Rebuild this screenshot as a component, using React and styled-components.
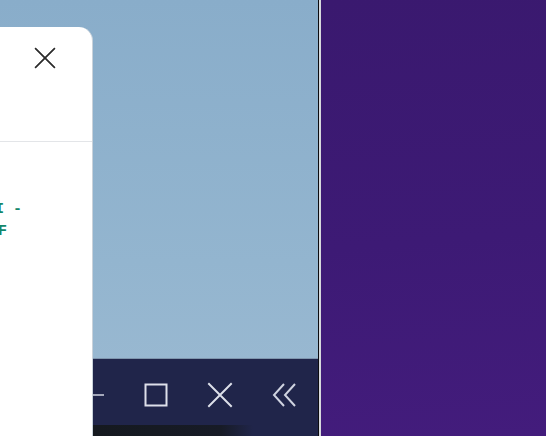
import styled, { createGlobalStyle } from "styled-components";

const GlobalStyle = createGlobalStyle`
    html, body {
        margin: 0;
        padding: 0;
        overflow: hidden;
        background: #3b1a72;
    }
`;

const Screen = styled.div`
    display: flex;
    width: 546px;
    height: 436px;
    overflow: hidden;
`;

const Desktop = styled.section`
    display: flex;
    flex-shrink: 0;
    width: 319px;
    height: 100%;
    box-sizing: border-box;
    background: linear-gradient(180deg, #89adca 0%, #93b5cf 60%, #9cbad2 100%);
    border-right: 1px solid #0c0c10;
`;

const Splitter = styled.div`
    flex-shrink: 0;
    width: 2px;
    background: #d6d8dc;
`;

const Wallpaper = styled.section`
    flex: 1;
    background: linear-gradient(175deg, #3a196f 0%, #3d1a75 55%, #431c7c 100%);
`;

const Dialog = styled.div`
    display: flex;
    flex-direction: column;
    flex-shrink: 0;
    width: 93px;
    margin-top: 27px;
    background: #ffffff;
    border-right: 1px solid #c9d2da;
    border-top-right-radius: 14px;
    box-sizing: border-box;
    overflow: hidden;
`;

const DialogHeader = styled.div`
    display: flex;
    justify-content: flex-end;
    height: 115px;
    padding: 19px 35px 0 0;
    box-sizing: border-box;
    border-bottom: 1px solid #e3e5e8;
`;

const CloseButton = styled.button`
    display: flex;
    width: 24px;
    height: 24px;
    padding: 0;
    border: none;
    background: none;
    align-items: center;
    justify-content: center;
`;

const DialogBody = styled.div`
    display: flex;
    flex-direction: column;
    padding-top: 57px;
    margin-left: -5px;
`;

const CodeLine = styled.div`
    font-family: "Liberation Mono", "DejaVu Sans Mono", monospace;
    font-size: 15px;
    line-height: 22px;
    font-weight: bold;
    color: #14876a;
    white-space: pre;
    padding-left: ${props => props.$indent || 0}px;
`;

const Side = styled.div`
    display: flex;
    flex-direction: column;
    flex: 1;
    min-width: 0;
`;

const Spacer = styled.div`
    flex: 1;
`;

const Taskbar = styled.nav`
    display: flex;
    flex-direction: column;
    height: 77px;
    background: #20254a;
    border-top: 1px solid #7f95ad;
    overflow: hidden;
`;

const TaskButtons = styled.div`
    display: flex;
    align-items: center;
    flex: 1;
    padding-top: 6px;
`;

const TaskButton = styled.div`
    display: flex;
    flex-shrink: 0;
    align-items: center;
    justify-content: center;
    width: ${props => props.$w}px;
    height: 100%;
`;

const Shelf = styled.div`
    height: 11px;
    width: 160px;
    background: linear-gradient(90deg, #15191f 0%, #171b26 80%, rgba(32, 37, 74, 0) 100%);
`;

function Cross({ size = 20, color = "#2b2b2b", width = 1.6 }) {
    return (
        <svg width={size} height={size} viewBox="0 0 20 20">
            <path d="M1 1 L19 19 M19 1 L1 19" stroke={color} strokeWidth={width} fill="none" />
        </svg>
    );
}

export default function App() {
    return (
        <>
            <GlobalStyle />
            <Screen>
                <Desktop>
                    <Dialog>
                        <DialogHeader>
                            <CloseButton aria-label="close">
                                <Cross size={22} />
                            </CloseButton>
                        </DialogHeader>
                        <DialogBody>
                            <CodeLine>{"I -"}</CodeLine>
                            <CodeLine $indent={3}>{"F"}</CodeLine>
                        </DialogBody>
                    </Dialog>
                    <Side>
                        <Spacer />
                        <Taskbar>
                            <TaskButtons>
                                <TaskButton $w={22}>
                                    <svg width="22" height="4" viewBox="0 0 22 4">
                                        <path d="M-8 2 H11" stroke="#c6cad8" strokeWidth="1.6" />
                                    </svg>
                                </TaskButton>
                                <TaskButton $w={82}>
                                    <svg width="24" height="24" viewBox="0 0 24 24">
                                        <rect x="1.5" y="1.5" width="21" height="21" stroke="#dde0ea" strokeWidth="2" fill="none" />
                                    </svg>
                                </TaskButton>
                                <TaskButton $w={46}>
                                    <Cross size={26} color="#dde0ea" width={1.5} />
                                </TaskButton>
                                <TaskButton $w={84}>
                                    <svg width="28" height="28" viewBox="0 0 28 28">
                                        <path d="M13 3 L3 14 L13 25 M24 3 L14 14 L24 25" stroke="#cfd3e0" strokeWidth="2" fill="none" />
                                    </svg>
                                </TaskButton>
                            </TaskButtons>
                            <Shelf />
                        </Taskbar>
                    </Side>
                </Desktop>
                <Splitter />
                <Wallpaper />
            </Screen>
        </>
    );
}
